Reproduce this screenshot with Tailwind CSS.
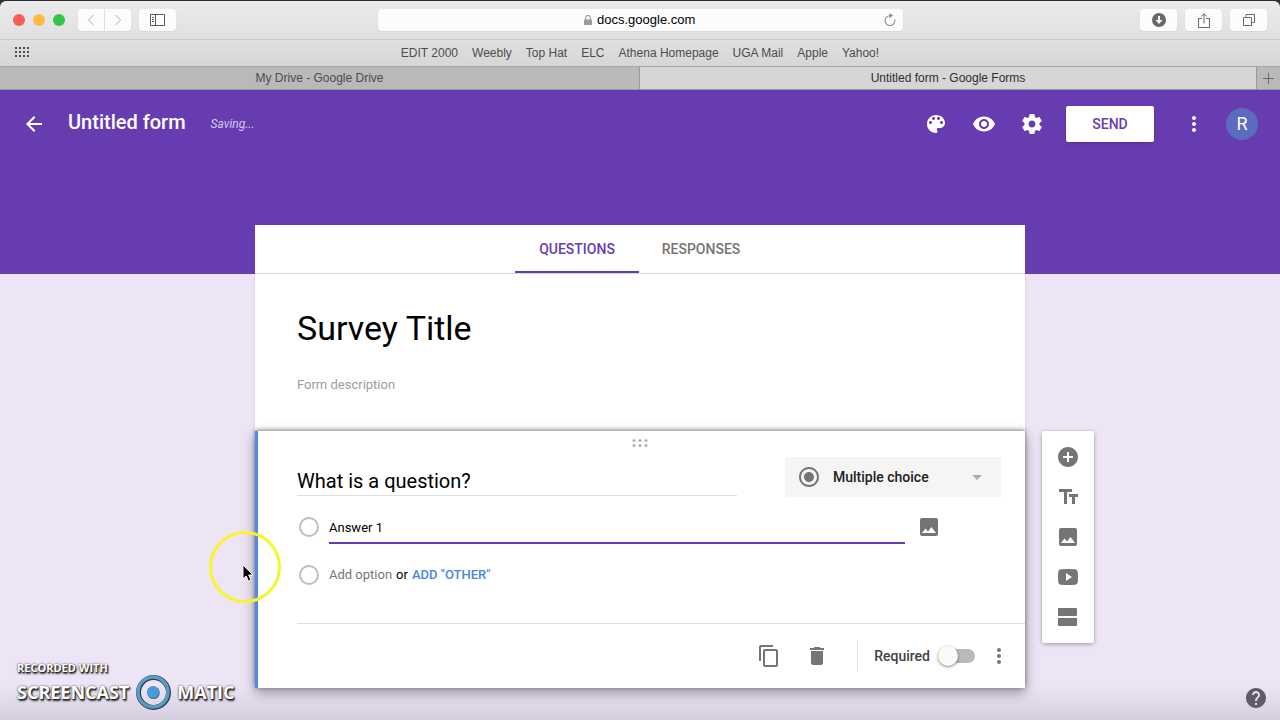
<!DOCTYPE html>
<html lang="en">
<head>
<meta charset="utf-8">
<meta name="viewport" content="width=device-width, initial-scale=1">
<title>Untitled form - Google Forms</title>
<script src="https://cdn.jsdelivr.net/npm/@tailwindcss/browser@4"></script>
</head>
<body class="relative flex min-h-screen flex-col overflow-hidden bg-[#ede5f6] font-['Roboto',sans-serif] text-sm text-black">

<!-- Browser chrome -->
<div class="border-b border-[#9a9a9a] bg-[#2b2d3b] pt-px font-['Liberation_Sans',sans-serif] text-xs text-[#4c4c4c]">
  <div class="grid h-[39px] grid-cols-[1fr_minmax(0,525px)_1fr] items-center rounded-t-md border-b border-[#c9c9c9] bg-linear-to-b from-[#ebebeb] to-[#e0e0e0]">
    <div class="flex items-center pl-[13px]">
      <div class="flex gap-2">
        <button aria-label="Close window" class="size-3 rounded-full bg-[#fa5f57]"></button>
        <button aria-label="Minimize window" class="size-3 rounded-full bg-[#fbbc40]"></button>
        <button aria-label="Zoom window" class="size-3 rounded-full bg-[#34c648]"></button>
      </div>
      <div class="ml-[13px] flex gap-px">
        <button aria-label="Back" class="flex h-[22px] w-[26px] items-center justify-center rounded-l bg-[#fcfcfc] shadow-xs">
          <svg class="size-3" viewBox="0 0 12 12" fill="none" stroke="#cfcfcf" stroke-width="1.3"><path d="M8.5 1 3.5 6l5 5"/></svg>
        </button>
        <button aria-label="Forward" class="flex h-[22px] w-[26px] items-center justify-center rounded-r bg-[#fcfcfc] shadow-xs">
          <svg class="size-3" viewBox="0 0 12 12" fill="none" stroke="#cfcfcf" stroke-width="1.3"><path d="m3.500 1 5 5-5 5"/></svg>
        </button>
      </div>
      <button aria-label="Show sidebar" class="ml-2 flex h-[22px] w-[37px] items-center justify-center rounded bg-[#fcfcfc] shadow-xs">
        <svg class="h-3 w-[15px]" viewBox="0 0 15 12" fill="none" stroke="#5c5c5c"><path d="M.5.5h14v11H.5zM5.500.5v11M2 3.500h2M2 5.500h2M2 7.500h2"/></svg>
      </button>
    </div>
    <div class="flex h-[22px] items-center rounded bg-[#fcfcfc] pr-[7px] pl-6 shadow-xs">
      <div class="flex flex-1 items-center justify-center gap-[5px]">
        <svg class="h-[10px] w-2" viewBox="0 0 8 10"><path d="M0 4.500h8V10H0z" fill="#9b9b9b"/><path d="M1.700 5V2.800a2.300 2.300 0 0 1 4.600 0V5" fill="none" stroke="#9b9b9b" stroke-width="1.100"/></svg>
        <input aria-label="Address" value="docs.google.com" class="w-[104px] bg-transparent text-[13px] text-black outline-none">
      </div>
      <button aria-label="Reload page">
        <svg class="h-[14px] w-3" viewBox="0 0 12 14" fill="none" stroke="#8a8a8a" stroke-width="1.100"><path d="M6 2.700a4.900 4.900 0 1 0 4.700 3.600"/><path d="M5.500 0v5.200L9 2.600z" fill="#8a8a8a" stroke="none"/></svg>
      </button>
    </div>
    <div class="flex justify-end gap-2 pr-[13px]">
      <button aria-label="Downloads" class="flex h-[22px] w-[37px] items-center justify-center rounded bg-[#fcfcfc] shadow-xs">
        <svg class="size-[14px]" viewBox="0 0 14 14"><circle cx="7" cy="7" r="7" fill="#696969"/><path d="M6 3h2v4h2.500L7 11 3.500 7H6z" fill="#fff"/></svg>
      </button>
      <button aria-label="Share" class="flex h-[22px] w-[37px] items-center justify-center rounded bg-[#fcfcfc] shadow-xs">
        <svg class="h-[15px] w-3" viewBox="0 0 12 15" fill="none" stroke="#696969"><path d="M4 5.500H.5v9h11v-9H8M6 10.500V1M3.300 3.500 6 .8l2.700 2.700"/></svg>
      </button>
      <button aria-label="Show all tabs" class="flex h-[22px] w-[37px] items-center justify-center rounded bg-[#fcfcfc] shadow-xs">
        <svg class="size-3" viewBox="0 0 12 12" fill="none" stroke="#696969"><path d="M.5 3.500h8v8h-8zM3 2.800V.5h8.500v8H9.200"/></svg>
      </button>
    </div>
  </div>
  <nav aria-label="Favorites" class="grid h-[26px] grid-cols-[1fr_auto_1fr] items-center bg-linear-to-b from-[#e0e0e0] to-[#d6d6d6] px-[15px]">
    <button aria-label="Show top sites" class="w-[15px]">
      <svg class="mb-[2px] h-[11px] w-[15px]" viewBox="0 0 15 11" fill="#4f4f4f"><path d="M0 0h2v2H0zM4 0h2v2H4zM8 0h2v2H8zM12 0h2v2h-2zM0 4h2v2H0zM4 4h2v2H4zM8 4h2v2H8zM12 4h2v2h-2zM0 8h2v2H0zM4 8h2v2H4zM8 8h2v2H8zM12 8h2v2h-2z"/></svg>
    </button>
    <div class="flex gap-[14px]">
      <a href="#">EDIT 2000</a><a href="#">Weebly</a><a href="#">Top Hat</a><a href="#">ELC</a><a href="#">Athena Homepage</a><a href="#">UGA Mail</a><a href="#">Apple</a><a href="#">Yahoo!</a>
    </div>
  </nav>
  <div class="flex h-[23px] border-t border-[#a8a8a8] bg-[#b9b9b9]">
    <button class="w-1/2 border-r border-[#999]">My Drive - Google Drive</button>
    <button class="flex-1 bg-[#d6d6d6] text-[#2e2e2e]">Untitled form - Google Forms</button>
    <button aria-label="New tab" class="flex w-6 items-center justify-center border-l border-[#999]">
      <svg class="size-[11px]" viewBox="0 0 11 11" stroke="#6b6b6b"><path d="M5.500 0v11M0 5.500h11"/></svg>
    </button>
  </div>
</div>

<!-- Form header -->
<header class="bg-[#673cb0] text-white">
  <div class="flex h-[67px] items-center pr-[22px] pl-[22px]">
    <button aria-label="Back to Forms"><svg class="size-6" viewBox="0 0 24 24" fill="#fff"><path d="M20 11H7.830l5.590-5.590L12 4l-8 8 8 8 1.410-1.410L7.830 13H20v-2z"/></svg></button>
    <h1 class="ml-[22px] pb-[3px] text-xl font-medium">Untitled form</h1>
    <p class="ml-[25px] text-xs text-[#d6c8ed] italic">Saving...</p>
    <div class="ml-auto flex items-center gap-6">
      <button aria-label="Color palette"><svg class="size-6" viewBox="0 0 24 24" fill="#fff"><path d="M12 3c-4.970 0-9 4.030-9 9s4.030 9 9 9c.83 0 1.500-.67 1.500-1.500 0-.39-.15-.74-.39-1.010-.23-.26-.38-.61-.38-.99 0-.83.67-1.500 1.500-1.500H16c2.760 0 5-2.240 5-5 0-4.420-4.030-8-9-8zm-5.500 9c-.83 0-1.500-.67-1.500-1.500S5.670 9 6.500 9 8 9.670 8 10.500 7.330 12 6.500 12zm3-4C8.670 8 8 7.330 8 6.500S8.670 5 9.500 5s1.500.67 1.500 1.500S10.330 8 9.500 8zm5 0c-.83 0-1.500-.67-1.500-1.500S13.670 5 14.500 5s1.500.67 1.500 1.500S15.330 8 14.500 8zm3 4c-.83 0-1.500-.67-1.500-1.500S16.670 9 17.500 9s1.500.67 1.500 1.500-.67 1.500-1.500 1.500z"/></svg></button>
      <button aria-label="Preview"><svg class="size-6" viewBox="0 0 24 24" fill="#fff"><path d="M12 4.500C7 4.500 2.730 7.610 1 12c1.730 4.390 6 7.500 11 7.500s9.270-3.110 11-7.500c-1.730-4.390-6-7.500-11-7.500zM12 17c-2.760 0-5-2.240-5-5s2.240-5 5-5 5 2.240 5 5-2.240 5-5 5zm0-8c-1.660 0-3 1.340-3 3s1.340 3 3 3 3-1.340 3-3-1.340-3-3-3z"/></svg></button>
      <button aria-label="Settings"><svg class="size-6" viewBox="0 0 24 24" fill="#fff"><path d="M19.430 12.980c.04-.32.07-.64.07-.98s-.03-.66-.07-.98l2.110-1.650c.19-.15.24-.42.12-.64l-2-3.460c-.12-.22-.39-.3-.61-.22l-2.490 1c-.52-.4-1.080-.73-1.690-.98l-.38-2.650C14.460 2.180 14.250 2 14 2h-4c-.25 0-.46.18-.49.42l-.38 2.650c-.61.25-1.170.59-1.690.98l-2.490-1c-.23-.09-.49 0-.61.22l-2 3.460c-.13.22-.07.49.12.64l2.110 1.650c-.04.32-.07.65-.07.98s.03.66.07.98l-2.110 1.650c-.19.15-.24.42-.12.64l2 3.460c.12.22.39.3.61.22l2.490-1c.52.4 1.080.73 1.690.98l.38 2.650c.03.24.24.42.49.42h4c.25 0 .46-.18.49-.42l.38-2.650c.61-.25 1.170-.59 1.690-.98l2.490 1c.23.09.49 0 .61-.22l2-3.460c.12-.22.07-.49-.12-.64l-2.110-1.650zM12 15.500c-1.930 0-3.500-1.570-3.500-3.500s1.570-3.500 3.500-3.500 3.500 1.570 3.500 3.500-1.570 3.500-3.500 3.500z"/></svg></button>
    </div>
    <button class="ml-[22px] h-9 w-[88px] rounded-xs bg-white font-medium text-[#673cb0] shadow-md">SEND</button>
    <button aria-label="More" class="ml-7"><svg class="size-6" viewBox="0 0 24 24" fill="#fff"><path d="M12 8c1.100 0 2-.9 2-2s-.9-2-2-2-2 .9-2 2 .9 2 2 2zm0 2c-1.100 0-2 .9-2 2s.9 2 2 2 2-.9 2-2-.9-2-2-2zm0 6c-1.100 0-2 .9-2 2s.9 2 2 2 2-.9 2-2-.9-2-2-2z"/></svg></button>
    <button aria-label="Account" class="ml-5 size-8 rounded-full bg-[#5c6bc0] text-lg">R</button>
  </div>
  <div class="mx-auto mt-[68px] flex h-[49px] max-w-[770px] justify-center border-b border-[#dcd8e2] bg-white pr-[2px] font-medium" role="tablist">
    <button role="tab" aria-selected="true" class="w-[124px] border-b-2 border-[#673cb0] pt-px text-[#673cb0]">QUESTIONS</button>
    <button role="tab" aria-selected="false" class="w-[124px] border-b-2 border-transparent pt-px text-[#757575]">RESPONSES</button>
  </div>
</header>

<!-- Form editor -->
<main class="grid grid-cols-[1fr_minmax(0,770px)_1fr]">
  <section class="col-start-2 h-[157px] bg-white px-[42px] pt-7 shadow-sm">
    <input aria-label="Form title" value="Survey Title" class="block h-[52px] w-full text-[34px] outline-none">
    <input aria-label="Form description" placeholder="Form description" class="mt-5 block h-5 w-full text-[13px] outline-none placeholder:text-[#9e9e9e]">
  </section>
  <section class="relative col-start-2 row-start-2 border-l-[3px] border-[#4f8ae8] bg-white pl-[39px] shadow-[0_-1px_4px_rgba(0,0,0,0.4),0_4px_12px_rgba(0,0,0,0.4)]">
    <button aria-label="Move question" class="mx-auto flex w-full justify-center pt-2 pr-[42px]">
      <svg class="h-2 w-4" viewBox="0 0 16 8" fill="#b0b0b0"><circle cx="2" cy="1.500" r="1.500"/><circle cx="8" cy="1.500" r="1.500"/><circle cx="14" cy="1.500" r="1.500"/><circle cx="2" cy="6.500" r="1.500"/><circle cx="8" cy="6.500" r="1.500"/><circle cx="14" cy="6.500" r="1.500"/></svg>
    </button>
    <div class="mt-[10px] flex pr-6">
      <input aria-label="Question" value="What is a question?" class="mt-2 mr-12 h-[31px] min-w-0 flex-1 border-b border-[#e0e0e0] pt-[2px] text-xl outline-none">
      <div class="relative w-[216px]">
        <svg class="pointer-events-none absolute top-2 left-3 size-6" viewBox="0 0 24 24" fill="#757575"><path d="M12 7c-2.760 0-5 2.240-5 5s2.240 5 5 5 5-2.240 5-5-2.240-5-5-5zm0-5C6.480 2 2 6.480 2 12s4.480 10 10 10 10-4.480 10-10S17.520 2 12 2zm0 18c-4.420 0-8-3.580-8-8s3.580-8 8-8 8 3.580 8 8-3.580 8-8 8z"/></svg>
        <select aria-label="Question type" class="h-10 w-full appearance-none rounded-xs bg-[#f5f5f5] pl-12 font-medium text-[#212121] outline-none"><option>Multiple choice</option></select>
        <svg class="pointer-events-none absolute top-[18px] right-[18px] h-[6px] w-3" viewBox="0 0 12 6" fill="#adadad"><path d="M1 0h10L6 5z"/></svg>
      </div>
    </div>
    <div class="mt-[10px] flex h-10 items-center text-[13px]">
      <input type="radio" aria-label="Option 1" class="ml-[2px] size-5 appearance-none rounded-full border-2 border-[#bdbdbd]" disabled>
      <input aria-label="Option 1 text" value="Answer 1" class="ml-[10px] h-[34px] min-w-0 flex-1 border-b-2 border-[#673cb0] pt-[2px] outline-none">
      <button aria-label="Add image" class="mr-[84px] ml-3"><svg class="size-6" viewBox="0 0 24 24" fill="#757575"><path d="M21 19V5c0-1.100-.9-2-2-2H5c-1.100 0-2 .9-2 2v14c0 1.100.9 2 2 2h14c1.100 0 2-.9 2-2zM5 18l3.500-4.500 2.500 3 3.500-4.500L19 18z"/></svg></button>
    </div>
    <div class="mt-2 flex h-10 items-center text-[13px]">
      <input type="radio" aria-label="New option" class="ml-[2px] size-5 appearance-none rounded-full border-2 border-[#bdbdbd]" disabled>
      <button class="ml-[10px] text-[#757575]">Add option</button>
      <span class="mx-1">or</span>
      <button class="font-medium text-[#4a86e0]">ADD "OTHER"</button>
    </div>
    <div class="mt-[28px] flex h-[65px] items-center border-t border-[#e0e0e0] pr-[14px]">
      <button aria-label="Duplicate" class="ml-auto"><svg class="size-6" viewBox="0 0 24 24" fill="#757575"><path d="M16 1H4c-1.100 0-2 .9-2 2v14h2V3h12V1zm3 4H8c-1.100 0-2 .9-2 2v14c0 1.100.9 2 2 2h11c1.100 0 2-.9 2-2V7c0-1.100-.9-2-2-2zm0 16H8V7h11v14z"/></svg></button>
      <button aria-label="Delete" class="ml-6"><svg class="size-6" viewBox="0 0 24 24" fill="#757575"><path d="M6 19c0 1.100.9 2 2 2h8c1.100 0 2-.9 2-2V7H6v12zM19 4h-3.500l-1-1h-5l-1 1H5v2h14V4z"/></svg></button>
      <div class="ml-7 h-8 w-px bg-[#e0e0e0]"></div>
      <label for="required" class="ml-4 font-medium text-[#424242]">Required</label>
      <span class="relative ml-2 flex w-[37px] items-center">
        <input id="required" type="checkbox" class="peer h-[14px] w-full appearance-none rounded-full bg-[#b9b9b9]">
        <span class="pointer-events-none absolute left-0 size-5 rounded-full bg-[#fafafa] shadow-[0_1px_3px_rgba(0,0,0,0.5)] peer-checked:right-0 peer-checked:left-auto"></span>
      </span>
      <button aria-label="More options" class="ml-3"><svg class="size-6" viewBox="0 0 24 24" fill="#757575"><path d="M12 8c1.100 0 2-.9 2-2s-.9-2-2-2-2 .9-2 2 .9 2 2 2zm0 2c-1.100 0-2 .9-2 2s.9 2 2 2 2-.9 2-2-.9-2-2-2zm0 6c-1.100 0-2 .9-2 2s.9 2 2 2 2-.9 2-2-.9-2-2-2z"/></svg></button>
    </div>
  </section>
  <aside class="col-start-3 row-start-2 ml-[17px] flex w-[52px] flex-col items-center gap-4 self-start justify-self-start rounded-xs bg-white py-[14px] shadow-[0_1px_4px_rgba(0,0,0,0.35)]">
    <button aria-label="Add question"><svg class="size-6" viewBox="0 0 24 24" fill="#757575"><path d="M12 2C6.480 2 2 6.480 2 12s4.480 10 10 10 10-4.480 10-10S17.520 2 12 2zm5 11h-4v4h-2v-4H7v-2h4V7h2v4h4v2z"/></svg></button>
    <button aria-label="Add title and description"><svg class="size-6" viewBox="0 0 24 24" fill="#757575"><path d="M3 4v3h5v12h3V7h5V4H3zm19 5h-9v3h3v7h3v-7h3V9z"/></svg></button>
    <button aria-label="Add image to form"><svg class="size-6" viewBox="0 0 24 24" fill="#757575"><path d="M21 19V5c0-1.100-.9-2-2-2H5c-1.100 0-2 .9-2 2v14c0 1.100.9 2 2 2h14c1.100 0 2-.9 2-2zM5 18l3.500-4.500 2.500 3 3.500-4.500L19 18z"/></svg></button>
    <button aria-label="Add video"><svg class="size-6" viewBox="0 0 24 24" fill="#757575"><path fill-rule="evenodd" d="M5 4.200Q12 3.900 19 4.200 21.500 4.300 21.800 7q.4 5 0 10-.3 2.500-2.800 2.700-7 .4-14 0-2.600-.2-2.800-2.700-.4-5 0-10Q2.400 4.400 5 4.200zM10 8v8l6-4z"/></svg></button>
    <button aria-label="Add section"><svg class="size-6" viewBox="0 0 24 24" fill="#757575"><path d="M2 3h18q1 0 1 1v6q0 1-1 1H2zM2 13h19v7q0 1-1 1H3q-1 0-1-1z"/></svg></button>
  </aside>
</main>

<!-- Shade along the bottom edge of the window -->
<div class="pointer-events-none absolute inset-x-0 bottom-0 h-9 bg-linear-to-t from-black/10 to-transparent"></div>

<!-- Recorder watermark -->
<div class="pointer-events-none absolute bottom-[10px] left-[17px] font-['Open_Sans',sans-serif] font-bold text-white [text-shadow:1px_1px_1px_#222,1px_2px_2px_#333,0_0_2px_#333]">
  <p class="text-[11px] leading-3">RECORDED WITH</p>
  <div class="flex items-center gap-[6px] text-lg leading-[36px]">
    <span>SCREENCAST</span>
    <svg class="size-9" viewBox="0 0 36 36" fill="none"><circle cx="18.500" cy="18.500" r="15" stroke="#333c48" stroke-width="5"/><circle cx="18" cy="18" r="15" stroke="#5a9bc8" stroke-width="3.500"/><circle cx="18.500" cy="18.800" r="6.300" fill="#4a6a85"/><circle cx="18" cy="18" r="6" fill="#4a9bd8"/></svg>
    <span>MATIC</span>
  </div>
</div>

<!-- Pointer with its highlight ring -->
<div class="pointer-events-none absolute top-[531px] left-[209px] size-[72px] rounded-full border-[3px] border-[#f6f62c]">
  <svg class="absolute top-[30px] left-[30px] h-[19px] w-[13px]" viewBox="0 0 13 19"><path d="M1 1v14l3.200-3 2.300 5.300 2.500-1.100-2.300-5.200H11z" fill="#000" stroke="#fff"/></svg>
</div>

<button aria-label="Help" class="absolute right-3 bottom-[10px]"><svg class="size-6" viewBox="0 0 24 24" fill="#5f5a66"><path d="M12 2C6.480 2 2 6.480 2 12s4.480 10 10 10 10-4.480 10-10S17.520 2 12 2zm1 17h-2v-2h2v2zm2.070-7.750l-.9.920C13.450 12.900 13 13.500 13 15h-2v-.5c0-1.100.45-2.100 1.170-2.830l1.240-1.260c.37-.36.59-.86.59-1.410 0-1.100-.9-2-2-2s-2 .9-2 2H8c0-2.210 1.790-4 4-4s4 1.790 4 4c0 .88-.36 1.680-.93 2.250z"/></svg></button>
</body>
</html>
